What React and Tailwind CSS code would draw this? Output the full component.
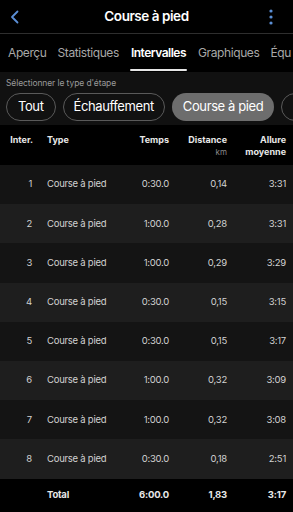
import React from "react";

const rows = [
  ["1", "0:30.0", "0,14", "3:31"],
  ["2", "1:00.0", "0,28", "3:31"],
  ["3", "1:00.0", "0,29", "3:29"],
  ["4", "0:30.0", "0,15", "3:15"],
  ["5", "0:30.0", "0,15", "3:17"],
  ["6", "1:00.0", "0,32", "3:09"],
  ["7", "1:00.0", "0,32", "3:08"],
  ["8", "0:30.0", "0,18", "2:51"],
];

export default function App() {
  return (
    <div
      className="w-[293px] h-[512px] overflow-hidden bg-black text-white"
      style={{ fontFamily: "Inter, 'Noto Sans', sans-serif" }}
    >
      {/* Title bar */}
      <div className="h-[33px] flex items-center justify-between px-[9px]">
        <svg width="10" height="14" viewBox="0 0 10 14" className="ml-[1px]">
          <path d="M7.5 1.5 L2 7 L7.5 12.5" fill="none" stroke="#5b8fd6" strokeWidth="1.8" strokeLinecap="round" strokeLinejoin="round" />
        </svg>
        <div className="text-[13.5px] font-semibold tracking-[-0.45px] ml-[4px]">Course à pied</div>
        <svg width="4" height="16" viewBox="0 0 4 16" className="mr-[11px]">
          <circle cx="2" cy="2" r="1.6" fill="#5b8fd6" />
          <circle cx="2" cy="8" r="1.6" fill="#5b8fd6" />
          <circle cx="2" cy="14" r="1.6" fill="#5b8fd6" />
        </svg>
      </div>
      <div className="h-px bg-[#2e2e2e]" />
      {/* Tabs */}
      <div className="h-[38px] flex items-stretch whitespace-nowrap text-[12px] tracking-[-0.4px] text-[#a8a8a8] pl-[8px] gap-[11px] overflow-hidden">
        <div className="flex items-center">Aperçu</div>
        <div className="flex items-center">Statistiques</div>
        <div className="flex flex-col justify-center relative text-white font-semibold tracking-[-0.5px] px-[1px]">
          Intervalles
          <div className="absolute left-0 right-0 bottom-[1px] h-[2px] bg-[#e6e6e6] rounded" />
        </div>
        <div className="flex items-center">Graphiques</div>
        <div className="flex items-center">Équ</div>
      </div>
      {/* Filter */}
      <div className="bg-[#111111] h-[53px] pt-[6px]">
        <div className="text-[8.5px] text-[#9a9a9a] pl-[6px] leading-[10px] tracking-[-0.1px]">Sélectionner le type d'étape</div>
        <div className="flex gap-[7px] pl-[6px] mt-[5px] whitespace-nowrap text-[13px] tracking-[-0.4px]">
          <div className="h-[28px] px-[11px] flex items-center rounded-full border border-[#5a5a5a]">Tout</div>
          <div className="h-[28px] px-[10px] flex items-center rounded-full border border-[#5a5a5a]">Échauffement</div>
          <div className="h-[28px] px-[11px] flex items-center rounded-full bg-[#6d6d6d]">Course à pied</div>
          <div className="h-[28px] w-[30px] shrink-0 rounded-full border border-[#5a5a5a]" />
        </div>
      </div>
      {/* Table header */}
      <div className="h-[40px] flex items-start pt-[9px] text-[9px] font-bold text-[#e8e8e8] leading-[12px]">
        <div className="w-[33px] text-right">Inter.</div>
        <div className="w-[100px] pl-[14px]">Type</div>
        <div className="w-[36px] text-right">Temps</div>
        <div className="w-[58px] text-right flex flex-col items-end">
          <span>Distance</span>
          <span className="font-normal text-[8px] text-[#8a8a8a]">km</span>
        </div>
        <div className="w-[59px] text-right flex flex-col items-end">
          <span>Allure</span>
          <span>moyenne</span>
        </div>
      </div>
      {/* Rows */}
      {rows.map((r, i) => (
        <div
          key={r[0]}
          className={`h-[39.2px] flex items-center text-[9.5px] tracking-[-0.25px] text-[#d2d2d2] ${i % 2 === 0 ? "bg-[#141414]" : "bg-[#1e1e1e]"}`}
        >
          <div className="w-[32px] text-right">{r[0]}</div>
          <div className="w-[101px] pl-[15px]">Course à pied</div>
          <div className="w-[36px] text-right">{r[1]}</div>
          <div className="w-[58px] text-right">{r[2]}</div>
          <div className="w-[59px] text-right">{r[3]}</div>
        </div>
      ))}
      {/* Total */}
      <div className="h-[34px] flex items-center text-[9.5px] tracking-[-0.2px] font-bold text-[#e8e8e8]">
        <div className="w-[32px]" />
        <div className="w-[101px] pl-[15px]">Total</div>
        <div className="w-[36px] text-right">6:00.0</div>
        <div className="w-[58px] text-right">1,83</div>
        <div className="w-[59px] text-right">3:17</div>
      </div>
    </div>
  );
}
